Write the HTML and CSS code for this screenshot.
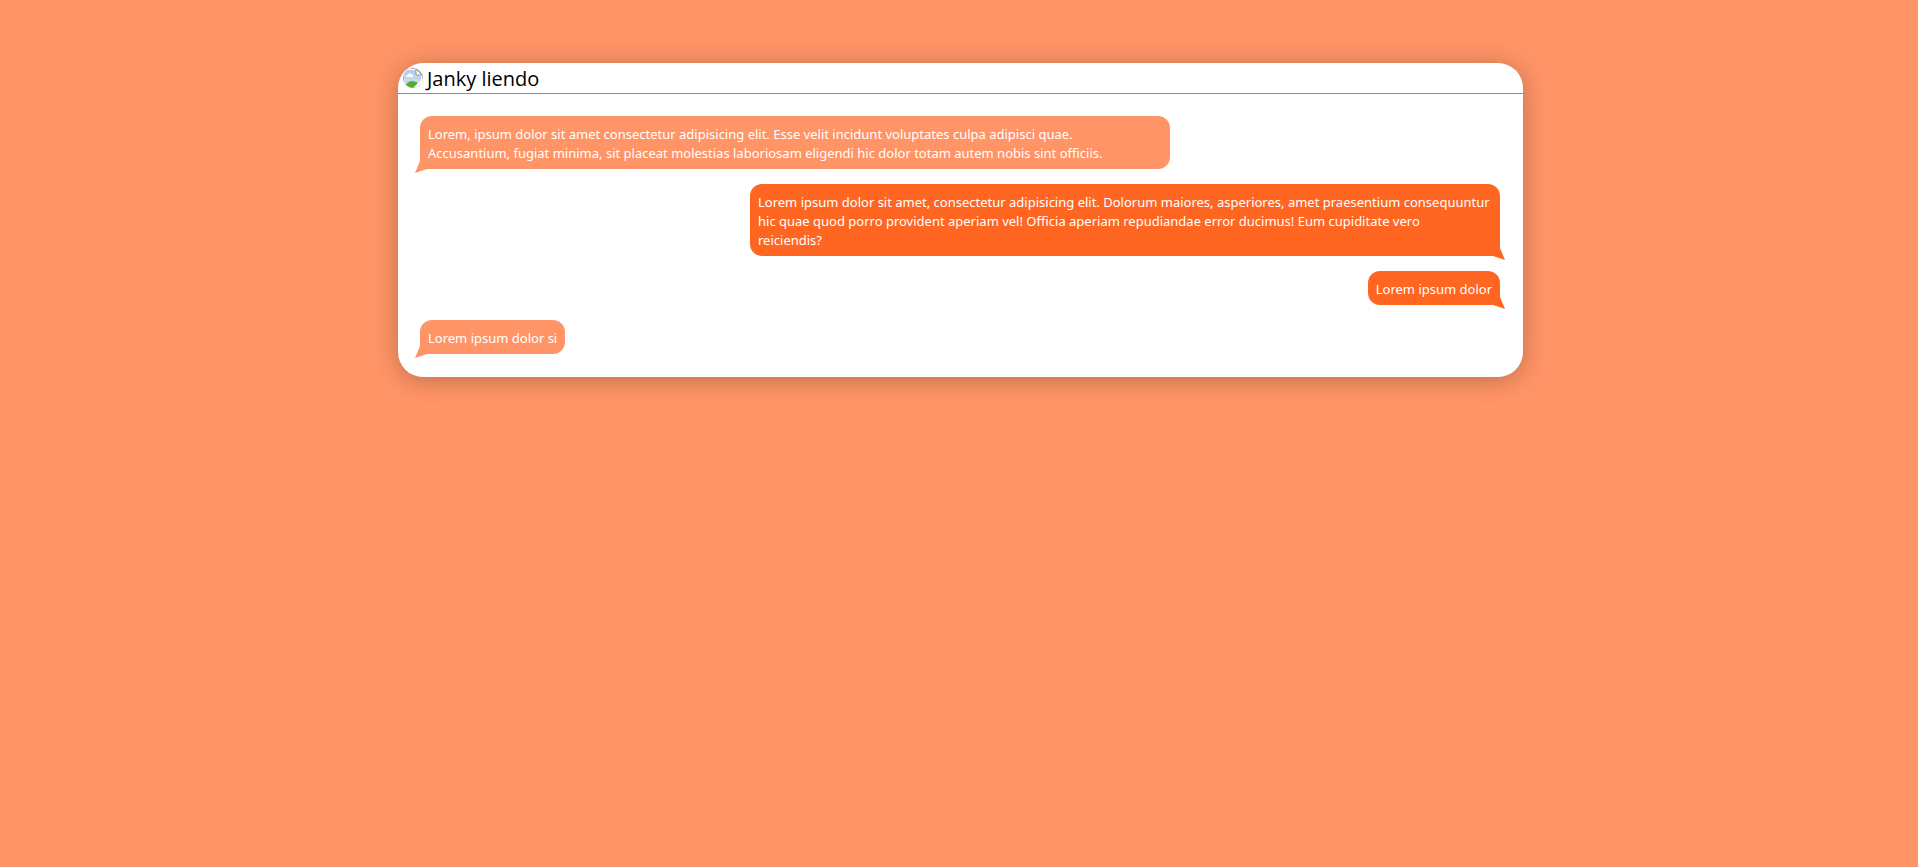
FILE: index.html
```html
<!DOCTYPE html>
<html lang="en">
<head>
<meta charset="utf-8">
<meta name="viewport" content="width=device-width, initial-scale=1">
<title>Chat</title>
<link rel="stylesheet" href="styles.css">
</head>
<body>
<main class="chat">
  <header class="chat-header">
    <svg class="avatar" viewBox="0 0 20 20" role="img" aria-label="Avatar">
      <defs>
        <clipPath id="round"><circle cx="10" cy="10" r="10"/></clipPath>
        <linearGradient id="sky" x1="0" y1="0" x2="0" y2="1"><stop offset="0" stop-color="#b5c8ee"/><stop offset="1" stop-color="#d3e0f8"/></linearGradient>
      </defs>
      <g clip-path="url(#round)">
        <path d="M0 0H14L20 6V20H0Z" fill="#a3a3a3"/>
        <path d="M1 1H13V7H19V19H1Z" fill="#fff"/>
        <path d="M1 2H13V7H18V19H1Z" fill="url(#sky)"/>
        <path d="M3 9Q3 7 5 7Q6 4 8 6Q10 6 10 9Z" fill="#fff"/>
        <path d="M1 20Q4 13 9 13Q15 13 19 20Z" fill="#56ac35"/>
        <path d="M20 10L10 20H14L20 14Z" fill="#fff"/>
        <path d="M13 1L19 7H13Z" fill="#fff" stroke="#999"/>
      </g>
    </svg>
    <h1 class="chat-name">Janky liendo</h1>
  </header>
  <section class="messages">
    <p class="message received">Lorem, ipsum dolor sit amet consectetur adipisicing elit. Esse velit incidunt voluptates culpa adipisci quae.<br>Accusantium, fugiat minima, sit placeat molestias laboriosam eligendi hic dolor totam autem nobis sint officiis.</p>
    <p class="message sent">Lorem ipsum dolor sit amet, consectetur adipisicing elit. Dolorum maiores, asperiores, amet praesentium consequuntur hic quae quod porro provident aperiam vel! Officia aperiam repudiandae error ducimus! Eum cupiditate vero<br>reiciendis?</p>
    <p class="message sent">Lorem ipsum dolor</p>
    <p class="message received">Lorem ipsum dolor si</p>
  </section>
</main>
</body>
</html>
```
FILE: styles.css
```css
* {
  box-sizing: border-box;
}

body {
  margin: 0;
  padding-left: 3px;
  background: #ff9466;
  font-family: "Noto Sans", "Open Sans", sans-serif;
}

.chat {
  width: 90%;
  max-width: 1125px;
  margin: 63px auto;
  overflow: hidden;
  background: #fff;
  border-radius: 25px;
  box-shadow: 0 3px 25px rgba(0, 0, 0, 0.25);
}

.chat-header {
  display: flex;
  align-items: center;
  gap: 4px;
  height: 31px;
  padding: 0 5px;
  border-bottom: 1px solid #ff6622;
}

.avatar {
  width: 20px;
  height: 20px;
}

.chat-name {
  margin: 0;
  padding-top: 2px;
  color: #000;
  font-family: "Open Sans", "Noto Sans", sans-serif;
  font-size: 20px;
  font-weight: 400;
  line-height: 28px;
}

.messages {
  display: flex;
  flex-direction: column;
  gap: 15px;
  padding: 22px 23px 23px 22px;
}

.message {
  position: relative;
  width: fit-content;
  max-width: 750px;
  margin: 0;
  padding: 9px 8px 6px;
  border-radius: 12px;
  color: #fff;
  font-size: 13px;
  line-height: 19px;
}

.received {
  align-self: flex-start;
  background: #ff9466;
  border-bottom-left-radius: 0;
}

.received:first-child {
  width: 100%;
}

.sent {
  align-self: flex-end;
  background: #ff6622;
  border-bottom-right-radius: 0;
}

.message::after {
  content: "";
  position: absolute;
  bottom: -4px;
  width: 12px;
  height: 12px;
  background: inherit;
}

.received::after {
  left: -5px;
  clip-path: polygon(5px 0, 12px 8px, 0 100%);
}

.sent::after {
  right: -5px;
  clip-path: polygon(7px 0, 100% 100%, 0 8px);
}
```
